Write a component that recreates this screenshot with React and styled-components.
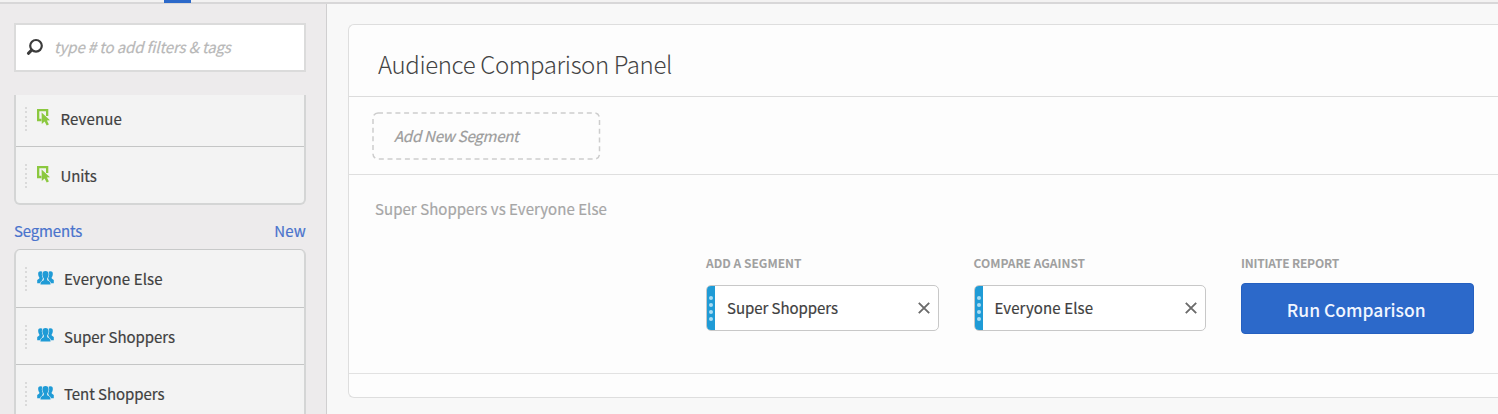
import React from 'react';
import styled, { createGlobalStyle } from 'styled-components';

const GlobalStyle = createGlobalStyle`
  *, *::before, *::after { box-sizing: border-box; }
  body {
    margin: 0;
    background: #f8f8f8;
    font-family: "Noto Sans CJK SC", "Open Sans", sans-serif;
    overflow: hidden;
  }
`;

const Page = styled.div`
  display: flex;
  flex-direction: column;
  height: 414px;
  overflow: hidden;
`;

const TopBar = styled.div`
  flex: none;
  height: 4px;
  padding-left: 164px;
  background: linear-gradient(#f3f2f2 0 2px, #d8d7d8 2px 4px);
`;

const ActiveTab = styled.div`
  width: 27px;
  height: 3px;
  background: #2c69ca;
`;

const Columns = styled.div`
  display: flex;
  flex: 1;
  min-height: 0;
`;

const Sidebar = styled.aside`
  flex: none;
  display: flex;
  flex-direction: column;
  width: 327px;
  padding: 19px 20px 0 14px;
  background: #edebec;
  border-right: 1px solid #d0cfd0;
`;

const SearchBox = styled.div`
  flex: none;
  display: flex;
  align-items: center;
  height: 49px;
  padding: 0 0 1px 9px;
  gap: 11px;
  width: 292px;
  background: #fff;
  border: 2px solid #dbdbdb;
`;

const Label = styled.span`
  display: block;
  flex: none;
  white-space: nowrap;
  line-height: 20px;
  font-size: ${(p) => p.$size || 15}px;
  font-weight: ${(p) => p.$weight || 400};
  font-style: ${(p) => (p.$italic ? 'italic' : 'normal')};
  color: ${(p) => p.$color || '#404040'};
  letter-spacing: ${(p) => p.$track || 0}px;
  -webkit-text-stroke: ${(p) => (p.$weight ? 0 : 0.2)}px;
`;

const List = styled.ul`
  flex: none;
  list-style: none;
  margin: ${(p) => p.$top}px 0 0;
  padding: 0;
  width: 292px;
  background: #f3f3f3;
  border: 2px solid #d4d5d5;
  border-top: ${(p) => (p.$cut ? '0' : '1px solid #c8c9c9')};
  border-radius: ${(p) => (p.$cut ? '0 0 6px 6px' : '6px')};
`;

const Item = styled.li`
  display: flex;
  align-items: center;
  height: ${(p) => p.$height || 57.5}px;
  padding: ${(p) => p.$drop || 0}px 0 ${(p) => p.$lift || 0}px 9px;
  border-bottom: 1.5px solid #c4c5c5;
  &:last-child { border-bottom: 0; }
`;

const Grip = styled.span`
  width: 2px;
  height: 24px;
  margin-right: 10px;
  background: repeating-linear-gradient(#dadada 0 2px, transparent 2px 4.4px);
`;

const IconSlot = styled.span`
  display: flex;
  width: ${(p) => p.$width}px;
  margin-top: -3px;
`;

const SectionHead = styled.div`
  flex: none;
  display: flex;
  justify-content: space-between;
  width: 292px;
  margin-top: 16px;
`;

const Main = styled.main`
  flex: 1;
  min-width: 0;
  padding: 20px 0 0 21px;
`;

const Panel = styled.section`
  display: flex;
  flex-direction: column;
  width: 1170px;
  height: 374px;
  background: #fdfdfd;
  border: 1.5px solid #dedede;
  border-right: 0;
  border-radius: 6px 0 0 6px;
`;

const PanelTitle = styled.header`
  display: flex;
  align-items: center;
  height: 72px;
  padding: 6px 0 0 29px;
  border-bottom: 1px solid #dcdcdc;
`;

const DropRow = styled.div`
  display: flex;
  align-items: center;
  height: 78px;
  padding-left: 23px;
  border-bottom: 1px solid #dfdfdf;
`;

const DashedBox = styled.svg`
  display: block;
  grid-area: 1 / 1;
`;

const DropZone = styled.div`
  display: grid;
  align-items: center;
  width: 229px;
  height: 48px;
  > span { grid-area: 1 / 1; padding: 1px 0 0 22px; }
`;

const Builder = styled.div`
  height: 199px;
  padding: 24px 0 0 26px;
  border-bottom: 1px solid #e2e2e2;
`;

const Fields = styled.div`
  display: flex;
  gap: 35px;
  padding: 34px 0 0 331px;
`;

const Field = styled.div`
  display: flex;
  flex-direction: column;
  width: 232.5px;
`;

const Chip = styled.div`
  display: flex;
  align-items: center;
  height: 46px;
  margin-top: 12px;
  padding-right: 8px;
  background: #fff;
  border: 1px solid #c8c8c8;
  border-radius: 5px;
  overflow: hidden;
  > span { margin-left: 12px; flex: 1; }
`;

const Handle = styled.i`
  display: flex;
  flex-direction: column;
  align-items: center;
  justify-content: center;
  gap: 3px;
  width: 8px;
  height: 46px;
  background: #1f9bd6;
`;

const Dot = styled.i`
  width: 4px;
  height: 4px;
  border-radius: 50%;
  background: #a9dcf3;
`;

const RunButton = styled.button`
  display: flex;
  align-items: center;
  justify-content: center;
  height: 51px;
  margin: 10px 0 0;
  padding: 2px 2px 0 0;
  font-family: inherit;
  background: #2c69ca;
  border: 1px solid #2560c0;
  border-radius: 4px;
`;

const SearchIcon = () => (
  <svg width="18" height="18" viewBox="0 0 18 18" fill="none" stroke="#3b3b3b">
    <circle cx="11" cy="7.800" r="5.800" strokeWidth="2.200" />
    <path d="M6.600 12.200 3.400 15.300" strokeWidth="3" strokeLinecap="round" />
  </svg>
);

const MetricIcon = () => (
  <svg width="14" height="17" viewBox="0 0 14 17" fill="#8bc83f">
    <path d="M0 0h11.300v7H9V2.300H2.300v7.500h2.200v2.400H0z" />
    <path d="M4.600 3.600 13 11.200 9.900 11.600 11.900 15.400 9.700 16.400 7.600 12.600 4.800 15z" />
  </svg>
);

const SegmentIcon = () => (
  <svg width="17" height="14" viewBox="0 0 17 14" fill="#1f9bd6">
    <path d="M3.600.3C1.700.3 1 1.500 1.200 3.400c.1 1.300.5 2.200 1.100 2.800v1.400L.2 9.100v3.200h4L6 7V1.200C5.300.600 4.500.3 3.600.3z" />
    <path d="M13.400.3c1.900 0 2.600 1.200 2.400 3.100-.1 1.300-.5 2.200-1.100 2.800v1.400l2.100 1.500v3.200h-4L11 7V1.200c.7-.6 1.500-.9 2.400-.9z" />
    <path
      d="M8.500 0C6.400 0 5.400 1.200 5.400 3.300c0 1.800.5 3 1.400 3.900v2.100C5.200 10 3.400 10.700 3.400 13.500h10.200c0-2.800-1.800-3.500-3.400-4.200V7.200c.9-.9 1.400-2.100 1.400-3.900C11.600 1.200 10.600 0 8.500 0z"
      stroke="#f3f3f3"
      strokeWidth="1.200"
      paintOrder="stroke"
    />
  </svg>
);

const CloseIcon = () => (
  <svg width="12" height="12" viewBox="0 0 12 12" stroke="#6b6b6b" strokeWidth="1.900">
    <path d="M.8.8 11.200 11.200M11.200.8.8 11.200" />
  </svg>
);

const ListItem = ({ icon, text, track, height, slot, lift, drop }) => (
  <Item $height={height} $lift={lift} $drop={drop}>
    <Grip />
    <IconSlot $width={slot}>{icon}</IconSlot>
    <Label $track={track}>{text}</Label>
  </Item>
);

const SegmentField = ({ label, labelTrack, value, track }) => (
  <Field>
    <Label $size={12} $weight={700} $color="#a0a0a0" $track={labelTrack}>{label}</Label>
    <Chip>
      <Handle><Dot /><Dot /><Dot /><Dot /></Handle>
      <Label $track={track}>{value}</Label>
      <CloseIcon />
    </Chip>
  </Field>
);

export default function App() {
  return (
    <Page>
      <GlobalStyle />
      <TopBar><ActiveTab /></TopBar>
      <Columns>
        <Sidebar>
          <SearchBox>
            <SearchIcon />
            <Label $italic $color="#b8b8b8" $track={-0.13}>type # to add filters &amp; tags</Label>
          </SearchBox>
          <List $cut $top={23}>
            <ListItem slot={23.5} height={52} lift={3} track={0.15} icon={<MetricIcon />} text="Revenue" />
            <ListItem slot={23.5} height={56} drop={2} track={-0.1} icon={<MetricIcon />} text="Units" />
          </List>
          <SectionHead>
            <Label $color="#4a73cc" $track={-0.15}>Segments</Label>
            <Label $color="#4a73cc" $track={0.2}>New</Label>
          </SectionHead>
          <List $top={8}>
            <ListItem slot={27} drop={2} track={0.12} icon={<SegmentIcon />} text="Everyone Else" />
            <ListItem slot={27} drop={2} track={-0.05} icon={<SegmentIcon />} text="Super Shoppers" />
            <ListItem slot={27} drop={1} track={-0.05} icon={<SegmentIcon />} text="Tent Shoppers" />
          </List>
        </Sidebar>
        <Main>
          <Panel>
            <PanelTitle>
              <Label $size={24} $weight={300} $color="#444" $track={-0.37}>Audience Comparison Panel</Label>
            </PanelTitle>
            <DropRow>
              <DropZone>
                <DashedBox width="229" height="48" fill="none">
                  <rect x="1" y="1" width="226.500" height="46" rx="5" stroke="#cdcdcd" strokeWidth="1.500" strokeDasharray="5 3.700" />
                </DashedBox>
                <Label $italic $color="#9c9c9c" $track={-0.25}>Add New Segment</Label>
              </DropZone>
            </DropRow>
            <Builder>
              <Label $color="#a6a6a6" $track={0.05}>Super Shoppers vs Everyone Else</Label>
              <Fields>
                <SegmentField label="ADD A SEGMENT" value="Super Shoppers" track={-0.05} />
                <SegmentField label="COMPARE AGAINST" value="Everyone Else" track={0.12} />
                <Field>
                  <Label $size={12} $weight={700} $color="#a0a0a0" $track={-0.2}>INITIATE REPORT</Label>
                  <RunButton>
                    <Label $size={17.5} $weight={500} $color="#f1f6ff">Run Comparison</Label>
                  </RunButton>
                </Field>
              </Fields>
            </Builder>
          </Panel>
        </Main>
      </Columns>
    </Page>
  );
}
